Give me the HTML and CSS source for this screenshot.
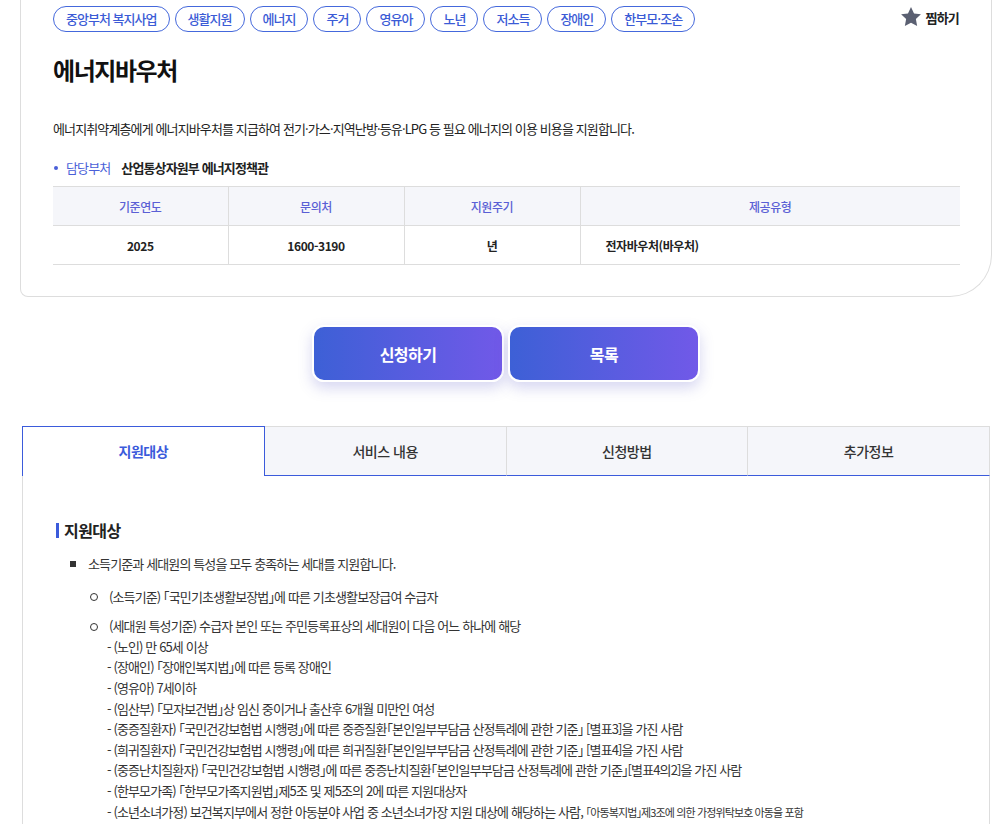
FILE: index.html
```html
<!DOCTYPE html>
<html lang="ko">
<head>
    <meta charset="UTF-8">
    <meta name="viewport" content="width=device-width, initial-scale=1.0">
    <title>에너지바우처 - 복지서비스 상세</title>
    <link rel="stylesheet" href="styles.css">
</head>
<body>
<div class="page">
    <!-- 상세 카드 -->
    <div class="card">
        <div class="card-top">
            <div class="tags">
                <span class="tag">중앙부처 복지사업</span>
                <span class="tag">생활지원</span>
                <span class="tag">에너지</span>
                <span class="tag">주거</span>
                <span class="tag">영유아</span>
                <span class="tag">노년</span>
                <span class="tag">저소득</span>
                <span class="tag">장애인</span>
                <span class="tag">한부모·조손</span>
            </div>
            <button class="fav" type="button">
                <svg width="22" height="22" viewBox="0 0 24 24"><path d="M12 1.2l3.3 6.9 7.5 1-5.5 5.2 1.4 7.5L12 18.2l-6.7 3.6 1.4-7.5L1.2 9.1l7.5-1z" fill="#5b6072"/></svg>
                찜하기
            </button>
        </div>
        <h1 class="title">에너지바우처</h1>
        <p class="desc">에너지취약계층에게 에너지바우처를 지급하여 전기·가스·지역난방·등유·LPG 등 필요 에너지의 이용 비용을 지원합니다.</p>
        <p class="dept"><span class="dept-label">담당부처</span><span class="dept-name">산업통상자원부 에너지정책관</span></p>
        <table class="info">
            <colgroup>
                <col class="c1"><col class="c2"><col class="c3"><col>
            </colgroup>
            <thead>
                <tr><th>기준연도</th><th>문의처</th><th>지원주기</th><th>제공유형</th></tr>
            </thead>
            <tbody>
                <tr><td>2025</td><td>1600-3190</td><td>년</td><td class="left">전자바우처(바우처)</td></tr>
            </tbody>
        </table>
    </div>

    <!-- 버튼 -->
    <div class="actions">
        <a class="btn" href="#">신청하기</a>
        <a class="btn" href="#">목록</a>
    </div>

    <!-- 탭 -->
    <div class="tab-box">
        <ul class="tabs">
            <li class="on">지원대상</li>
            <li>서비스 내용</li>
            <li>신청방법</li>
            <li>추가정보</li>
        </ul>
        <div class="panel">
            <h2 class="sec-title">지원대상</h2>
            <ul class="lv1">
                <li>소득기준과 세대원의 특성을 모두 충족하는 세대를 지원합니다.
                    <ul class="lv2">
                        <li>(소득기준) 「국민기초생활보장법」에 따른 기초생활보장급여 수급자</li>
                        <li>(세대원 특성기준) 수급자 본인 또는 주민등록표상의 세대원이 다음 어느 하나에 해당<br>
                            - (노인) 만 65세 이상<br>
                            - (장애인) 「장애인복지법」에 따른 등록 장애인<br>
                            - (영유아) 7세이하<br>
                            - (임산부) 「모자보건법」상 임신 중이거나 출산후 6개월 미만인 여성<br>
                            - (중증질환자) 「국민건강보험법 시행령」에 따른 중증질환「본인일부부담금 산정특례에 관한 기준」 [별표3]을 가진 사람<br>
                            - (희귀질환자) 「국민건강보험법 시행령」에 따른 희귀질환「본인일부부담금 산정특례에 관한 기준」 [별표4]을 가진 사람<br>
                            - (중증난치질환자) 「국민건강보험법 시행령」에 따른 중증난치질환「본인일부부담금 산정특례에 관한 기준」[별표4의2]을 가진 사람<br>
                            - (한부모가족) 「한부모가족지원법」제5조 및 제5조의 2에 따른 지원대상자<br>
                            - (소년소녀가정) 보건복지부에서 정한 아동분야 사업 중 소년소녀가장 지원 대상에 해당하는 사람, <span class="small">「아동복지법」제3조에 의한 가정위탁보호 아동을 포함</span>
                        </li>
                    </ul>
                </li>
            </ul>
        </div>
    </div>
</div>
</body>
</html>
```

FILE: styles.css
```css
* {
    box-sizing: border-box;
}
html, body {
    margin: 0;
    padding: 0;
    background: #fff;
}
body {
    font-family: "Noto Sans CJK KR", "Noto Sans", sans-serif;
    color: #222;
    letter-spacing: -0.055em;
    font-feature-settings: "halt";
}
ul {
    list-style: none;
    margin: 0;
    padding: 0;
}
p, h1, h2 {
    margin: 0;
}
.page {
    width: 972px;
    margin-left: 20px;
    padding-bottom: 60px;
}

/* 상세 카드 */
.card {
    border: 1px solid #ddd;
    border-top: 0;
    border-radius: 0 0 42px 8px;
    padding: 6px 31px 31px 32px;
}
.card-top {
    display: flex;
    justify-content: space-between;
    align-items: flex-start;
}
.tags {
    display: flex;
    gap: 5px;
}
.tag {
    height: 26px;
    line-height: 24px;
    padding: 0 12px;
    border: 1px solid #4468dc;
    border-radius: 13px;
    color: #3b5bd6;
    font-size: 13px;
    font-weight: 500;
    letter-spacing: -0.075em;
}
.fav {
    display: flex;
    align-items: center;
    gap: 3px;
    margin-top: 0;
    margin-right: 1px;
    padding: 0;
    border: 0;
    background: none;
    font-family: inherit;
    letter-spacing: -0.06em;
    font-size: 13px;
    font-weight: 700;
    color: #222;
}
.title {
    margin-top: 22px;
    font-size: 24px;
    line-height: 31px;
    font-weight: 700;
    letter-spacing: -0.06em;
    color: #111;
}
.desc {
    margin-top: 34px;
    font-size: 13px;
    line-height: 20px;
}
.dept {
    margin-top: 19px;
    font-size: 13px;
    line-height: 20px;
}
.dept-label {
    color: #4a5fd8;
    margin-right: 11px;
}
.dept-label::before {
    content: "";
    display: inline-block;
    width: 4px;
    height: 4px;
    border-radius: 50%;
    background: #4a5fd8;
    vertical-align: middle;
    margin: 0 8px 3px 1px;
}
.dept-name {
    font-weight: 700;
}
.info {
    width: 100%;
    margin-top: 8px;
    border-collapse: collapse;
    table-layout: fixed;
    font-size: 12px;
    letter-spacing: -0.035em;
}
.info .c1 {
    width: 175px;
}
.info .c2,
.info .c3 {
    width: 176px;
}
.info th,
.info td {
    height: 39px;
    text-align: center;
    border-top: 1px solid #ddd;
    border-bottom: 1px solid #ddd;
    border-left: 1px solid #ddd;
}
.info th:first-child,
.info td:first-child {
    border-left: 0;
}
.info th {
    background: #f5f6fa;
    color: #5a5fd5;
    font-weight: 500;
}
.info td {
    font-weight: 700;
}
.info td.left {
    text-align: left;
    padding-left: 25px;
}

/* 버튼 */
.actions {
    display: flex;
    justify-content: center;
    gap: 4px;
    margin-top: 28px;
}
.btn {
    width: 192px;
    height: 57px;
    display: flex;
    align-items: center;
    justify-content: center;
    border: 2px solid #fff;
    border-radius: 12px;
    background: linear-gradient(90deg, #3d60d6, #7159e8);
    box-shadow: 0 6px 14px rgba(90, 90, 200, 0.25);
    color: #fff;
    font-size: 16px;
    font-weight: 700;
    letter-spacing: -0.035em;
    text-decoration: none;
}

/* 탭 */
.tab-box {
    margin: 44px 2px 0;
}
.tabs {
    display: flex;
}
.tabs li {
    flex: 1;
    height: 50px;
    line-height: 48px;
    text-align: center;
    font-size: 14px;
    font-weight: 500;
    letter-spacing: -0.035em;
    color: #333;
    background: #f5f6fa;
    border-top: 1px solid #ddd;
    border-left: 1px solid #ddd;
    border-bottom: 1px solid #3b5bdb;
}
.tabs li:last-child {
    border-right: 1px solid #ddd;
}
.tabs li.on {
    background: #fff;
    color: #3b5bdb;
    font-weight: 700;
    border: 1px solid #3b5bdb;
    border-bottom: 0;
}
.tabs li.on + li {
    border-left: 0;
}
.panel {
    border-left: 1px solid #ddd;
    border-right: 1px solid #ddd;
    padding: 42px 33px 20px;
}
.sec-title {
    font-size: 16px;
    line-height: 24px;
    font-weight: 700;
    letter-spacing: -0.035em;
    color: #222;
}
.sec-title::before {
    content: "";
    display: inline-block;
    width: 3px;
    height: 15px;
    background: #3b5bdb;
    margin-right: 5px;
    vertical-align: -1px;
}
.lv1 {
    margin: 12px 0 0 14px;
    font-size: 13px;
    line-height: 20.6px;
    color: #333;
}
.lv1 > li {
    padding-left: 18px;
}
.lv1 > li::before {
    content: "";
    display: inline-block;
    width: 6px;
    height: 6px;
    background: #333;
    margin: 0 12px 2px -18px;
    vertical-align: middle;
}
.lv2 {
    margin: 12px 0 0 2px;
}
.lv2 > li {
    padding-left: 17px;
    margin-bottom: 9px;
}
.lv2 > li::before {
    content: "";
    display: inline-block;
    width: 6px;
    height: 6px;
    border: 1px solid #333;
    border-radius: 50%;
    margin: 0 11px 2px -17px;
    vertical-align: middle;
}
.small {
    font-size: 11px;
}
```
